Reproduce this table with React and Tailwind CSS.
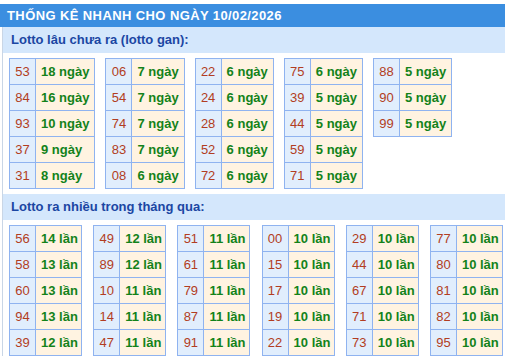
const ganTables = [
  [["53", "18 ngày"], ["84", "16 ngày"], ["93", "10 ngày"], ["37", "9 ngày"], ["31", "8 ngày"]],
  [["06", "7 ngày"], ["54", "7 ngày"], ["74", "7 ngày"], ["83", "7 ngày"], ["08", "6 ngày"]],
  [["22", "6 ngày"], ["24", "6 ngày"], ["28", "6 ngày"], ["52", "6 ngày"], ["72", "6 ngày"]],
  [["75", "6 ngày"], ["39", "5 ngày"], ["44", "5 ngày"], ["59", "5 ngày"], ["71", "5 ngày"]],
  [["88", "5 ngày"], ["90", "5 ngày"], ["99", "5 ngày"]],
];

const hotTables = [
  [["56", "14 lần"], ["58", "13 lần"], ["60", "13 lần"], ["94", "13 lần"], ["39", "12 lần"]],
  [["49", "12 lần"], ["89", "12 lần"], ["10", "11 lần"], ["14", "11 lần"], ["47", "11 lần"]],
  [["51", "11 lần"], ["61", "11 lần"], ["79", "11 lần"], ["87", "11 lần"], ["91", "11 lần"]],
  [["00", "10 lần"], ["15", "10 lần"], ["17", "10 lần"], ["19", "10 lần"], ["22", "10 lần"]],
  [["29", "10 lần"], ["44", "10 lần"], ["67", "10 lần"], ["71", "10 lần"], ["73", "10 lần"]],
  [["77", "10 lần"], ["80", "10 lần"], ["81", "10 lần"], ["82", "10 lần"], ["95", "10 lần"]],
];

function StatTable({ rows, fixed }) {
  return (
    <table className={"border-collapse border border-[#8fb3f0] self-start " + (fixed ? "w-[73px] table-fixed" : "")}>
      <tbody>
        {rows.map(([num, val]) => (
          <tr key={num} className="h-[26px]">
            <td className="border border-[#8fb3f0] bg-[#e1eefd] text-[#b23d22] text-[13px] text-center w-[26px] px-0">
              {num}
            </td>
            <td className="border border-[#8fb3f0] bg-[#fff3e1] text-[#13821a] text-[13px] font-bold px-[5px] whitespace-nowrap">
              {val}
            </td>
          </tr>
        ))}
      </tbody>
    </table>
  );
}

function SubHeader({ children }) {
  return (
    <div className="h-[26px] bg-[#d4e7fc] flex items-center pl-2 text-[13px] font-bold text-[#1b46a3]">
      {children}
    </div>
  );
}

export default function App() {
  return (
    <div className="w-[505px] h-[358px] bg-white overflow-hidden pt-1" style={{ fontFamily: '"Liberation Sans", Arial, sans-serif' }}>
      <div className="h-[23px] bg-[#3b8ee0] flex items-center pl-[7px] text-white text-[13px] font-bold tracking-[0.4px]">
        THỐNG KÊ NHANH CHO NGÀY 10/02/2026
      </div>
      <div className="border-l border-[#c9d6e6] ml-[2px] w-[600px]">
        <SubHeader>Lotto lâu chưa ra (lotto gan):</SubHeader>
        <div className="flex gap-[10px] pl-[6px] pt-[5px] h-[141px]">
          {ganTables.map((t, i) => (
            <StatTable key={i} rows={t} />
          ))}
        </div>
        <SubHeader>Lotto ra nhiều trong tháng qua:</SubHeader>
        <div className="flex justify-between w-[500px] pl-[6px] pt-[5px]">
          {hotTables.map((t, i) => (
            <StatTable key={i} rows={t} fixed />
          ))}
        </div>
      </div>
    </div>
  );
}
